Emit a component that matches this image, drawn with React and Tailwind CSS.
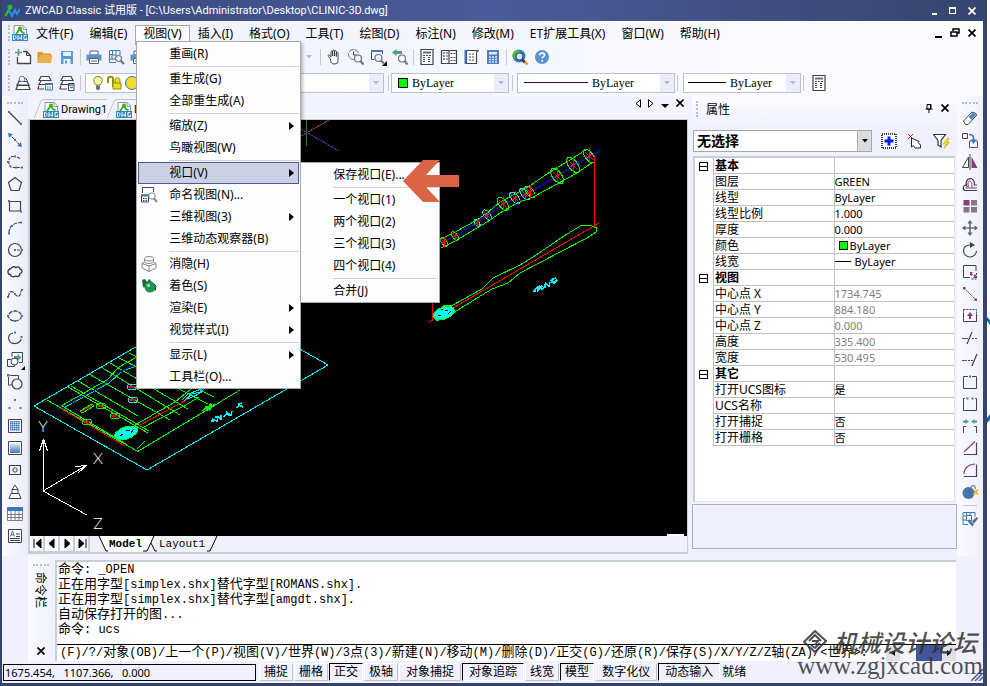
import { useState } from 'react'

const D = '#404448'
const B = '#3f78b4'
const P = '#8a3a80'
const G = '#4f9f86'

const icons = {
  dwg: (
    <>
      <path d="M2 .5h9l3.500 3.500v11.500h-12.500z" fill="#fff" stroke="#909498" />
      <path d="M11 .5v4h4" fill="none" stroke="#909498" />
      <path d="M4 9L8 3.500l1.500 3 3 2" fill="none" stroke="#3fae2a" strokeWidth="2" />
      <circle cx="8" cy="3.500" r="2" fill="#3fae2a" />
      <path d="M0 9h16v7H0z" fill="#2f86c8" />
      <path d="M1.500 14.500v-4c3.500 0 3.500 4 0 4M6 10v4.500l1.700-2 1.700 2V10M14.500 10.500H12v4h2.500v-2" fill="none" stroke="#fff" />
    </>
  ),
  newFile: (
    <>
      <path d="M8 2.500h3.500l4 4v8H2.500V8" fill="#fff" stroke={D} strokeWidth="1.300" />
      <path d="M11.500 2.500v4h4" fill="none" stroke={D} />
      <path d="M0 3.500h7M3.500 0v7" stroke={G} strokeWidth="1.600" />
    </>
  ),
  open: (
    <>
      <path d="M.5 14V3h5l1 1.500H14V14z" fill="#d9982a" />
      <path d="M.5 14L3 6h12.500L14 14z" fill="#eab04c" />
    </>
  ),
  save: (
    <>
      <path d="M2 2h12v13H2z" fill="#5b9bd5" />
      <path d="M4 3h8v4H4zM4.500 10h7v5h-7z" fill="#e8f1fa" />
      <path d="M6 11.500h2v3H6z" fill="#5b9bd5" />
    </>
  ),
  print: (
    <>
      <path d="M4 2h8v4H4z" fill="#fff" stroke="#5a6068" />
      <path d="M.5 5.500h15v6H.5z" fill="#5b95cf" />
      <path d="M3.500 9.500h9v5h-9z" fill="#fff" stroke="#5a6068" />
      <path d="M5 12h6" stroke="#5a6068" />
    </>
  ),
  preview: (
    <>
      <path d="M12 6V1.500H1.500v12H8M1.500 5.500h3v-4M8 1.500V6M4 6h4v4H4zM1.500 10h3" fill="none" stroke={B} />
      <circle cx="10.500" cy="9.500" r="3" fill="#f4f4fc" stroke="#707478" strokeWidth="1.200" />
      <path d="M12.700 11.700L16 15" stroke="#707478" strokeWidth="2" />
    </>
  ),
  hand: (
    <path d="M4.500 10L2.500 7.500C1.500 6 3 5.500 4 6.500l1 1.500V3c0-1.300 1.700-1.300 1.700 0v4-5c0-1.400 1.800-1.400 1.800 0v5-4.500c0-1.300 1.800-1.300 1.800 0V7.500 4c0-1.200 1.700-1.200 1.700 0v6.500c0 3-1 4.500-4 4.500s-3-2-3.500-5z" fill="#fff" stroke={D} />
  ),
  zoomTime: (
    <>
      <circle cx="5.500" cy="5.500" r="5" fill="none" stroke={B} strokeDasharray="5 1" />
      <path d="M5.500 2.500v3.500h3" fill="none" stroke={D} />
      <circle cx="10" cy="9.500" r="3.500" fill="#f4f4fc" stroke="#707478" strokeWidth="1.200" />
      <path d="M12.500 12l3 3.500" stroke="#707478" strokeWidth="2" />
    </>
  ),
  zoomWin: (
    <>
      <path d="M4 10.500H1.500V1.500h11V5" fill="none" stroke={D} />
      <path d="M1 2h12" stroke={B} strokeWidth="2" />
      <circle cx="8.500" cy="9" r="3.500" fill="#f4f4fc" stroke="#707478" strokeWidth="1.200" />
      <path d="M11 11.500l3 3" stroke="#707478" strokeWidth="2" />
      <path d="M17 12v5h-5z" fill="#000" />
    </>
  ),
  zoomPrev: (
    <>
      <path d="M0 3.500L4.500 0v2H10v3H4.500v2z" fill={G} />
      <circle cx="10" cy="9.500" r="3.500" fill="#f4f4fc" stroke="#707478" strokeWidth="1.200" />
      <path d="M12.500 12l3 3.500" stroke="#707478" strokeWidth="2" />
    </>
  ),
  propsTable: (
    <>
      <path d="M2 .5h12v15H2z" fill="#fff" stroke={D} strokeWidth="1.200" />
      <path d="M4 3.500h8" stroke="#686c70" strokeWidth="2" />
      <path d="M4 6.500h8M4 8.500h3M4 10.500h3M4 12.500h3M9 8.500h3M9 10.500h3M9 12.500h3" stroke={D} strokeDasharray="2 1" />
    </>
  ),
  panels: (
    <>
      <path d="M.5 1.500h15v13H.5zM8 1.500v13" fill="#fff" stroke={D} strokeWidth="1.200" />
      <path d="M2 4h2M2 7h2M2 10h2" stroke={B} strokeWidth="1.500" />
      <path d="M5 4h2M5 7h2M5 10h2M9.500 4.500h2M12.500 4.500h2M9.500 8.500h2M12.500 8.500h2M9.500 11.500h5" stroke={D} strokeDasharray="2 1" />
    </>
  ),
  palette: (
    <>
      <path d="M3.500 1.500H15l-1.500 2v11h-10z" fill="#fff" stroke={D} strokeWidth="1.200" />
      <path d="M2.500 1v14" stroke={B} strokeWidth="2" />
      <path d="M6 5h6M6 8h6M6 11h5" stroke={D} strokeDasharray="2 1" />
    </>
  ),
  calc: (
    <>
      <path d="M2 1h12v14H2z" fill="#5180c0" />
      <path d="M4 3h8v2.500H4z" fill="#dce8f6" />
      <path d="M4 8h8M4 10.500h8M4 13h8" stroke="#dce8f6" strokeWidth="1.500" strokeDasharray="2 1" />
    </>
  ),
  globe: (
    <>
      <circle cx="7" cy="7" r="6.500" fill="#2f7fd0" />
      <path d="M3 2c3-2 6 0 5 2S4 5 4 8s-3 1-3.500-1S1.500 3 3 2z" fill="#46b848" />
      <circle cx="7.500" cy="7.500" r="3.500" fill="#c6ecff" stroke="#444" strokeWidth="1.200" />
      <path d="M10 10.500l3 3" stroke="#4a2470" strokeWidth="2.500" />
      <path d="M13 13l2.500 2.500" stroke="#f0a020" strokeWidth="2.500" />
    </>
  ),
  help: (
    <>
      <circle cx="8" cy="8" r="7" fill="#5a92d0" />
      <path d="M5.700 6.300c0-3 4.800-3 4.800-.3 0 1.700-2.300 1.600-2.300 3.600M8.200 11v1.700" fill="none" stroke="#fff" strokeWidth="1.700" />
    </>
  ),
  layerPrev: (
    <>
      <path d="M4 6.500L2 10h12l-2-3.500zM2.500 10.500L1 14.500h14l-1.500-4z" fill="#fff" stroke={D} strokeWidth="1.200" />
      <path d="M3.500 6.500L5 3.500h6l1.500 3z" fill="#fff" stroke={D} />
      <circle cx="7" cy="4" r="2.800" fill="#eef4fb" stroke="#5a7c9c" />
    </>
  ),
  layerState: (
    <>
      <path d="M4 1.500h8l2 4H2zM4 6l-2 3.500h6M2 10.500L1 14h6" fill="#fff" stroke={D} strokeWidth="1.200" />
      <path d="M8.500 8.500h7v6.500h-7z" fill="#fff" stroke={B} />
      <path d="M8 9h8" stroke={B} strokeWidth="2" />
      <path d="M10 12h1.500M12.500 12H14M10 14h1.500M12.500 14H14" stroke={B} />
    </>
  ),
  layerMgr: (
    <>
      <path d="M4 1.500h8l2 4H2zM4 6l-2 3.500h7M2 10.500L1 14h7" fill="#fff" stroke={D} strokeWidth="1.200" />
      <path d="M9.500 8.500h5.500v7H9.500z" fill="#fff" stroke={D} />
      <path d="M10 10h5M11 12.500h3" stroke={B} strokeWidth="1.500" />
    </>
  ),
  line: (
    <>
      <path d="M2 2l12 12" stroke={D} strokeWidth="1.200" />
      <path d="M1 1h2v2H1zM13 13h2v2h-2z" fill={B} />
    </>
  ),
  xline: (
    <>
      <path d="M2 2l12 12" stroke={D} strokeDasharray="3 1" />
      <path d="M1 1l5 1-4 4zM15 15l-5-1 4-4z" fill={B} />
      <path d="M7 7h2v2H7z" fill={B} />
    </>
  ),
  pline: (
    <>
      <path d="M7 2.500H5.500c-5 0-5 10 0 11H14" fill="none" stroke={D} strokeWidth="1.200" strokeDasharray="3 1" />
      <path d="M10 3l3 1.500" stroke={D} strokeWidth="1.200" />
      <path d="M7 1.500h2v2H7zM0 7h2v2H0zM8 12.500h2v2H8zM14 12.500h2v2h-2z" fill={B} />
    </>
  ),
  polygon: <path d="M8 1.500l6.500 5-2.500 8H4l-2.500-8z" fill="none" stroke={D} strokeWidth="1.200" />,
  rect: (
    <>
      <path d="M3 3.500h10.500v9.500H2.500V4" fill="none" stroke={D} strokeWidth="1.200" />
      <path d="M1 2h2v2H1zM13 12.500h2v2h-2z" fill={B} />
    </>
  ),
  arc: (
    <>
      <path d="M2 13C2 7 6 3 13 2.500" fill="none" stroke={D} strokeWidth="1.200" strokeDasharray="4 1" />
      <path d="M1 12.500h2v2H1zM4 5h2v2H4zM13 1.500h2v2h-2z" fill={B} />
    </>
  ),
  circle: (
    <>
      <circle cx="8" cy="8" r="6.500" fill="none" stroke={D} strokeWidth="1.200" />
      <path d="M10 8h3" stroke={D} />
      <path d="M7 7h2v2H7zM14 7h2v2h-2z" fill={B} />
    </>
  ),
  cloud: (
    <path d="M4 4.500c1-2.500 4-2 5-1 2-1.500 4 0 4 1.500 3 1 2.500 4 0 4.500 0 3-3 3.500-4.500 2.500-2 1.500-5 .5-5-1.500C0 10 0 5.500 4 4.500z" fill="none" stroke={D} strokeWidth="1.400" />
  ),
  spline: (
    <>
      <path d="M1.500 11C2 4 6 5 8 8s5.500 4 6-3" fill="none" stroke={D} strokeWidth="1.200" strokeDasharray="4 1" />
      <path d="M0 10h2v2H0zM7 7h2v2H7zM14 3h2v2h-2z" fill={B} />
    </>
  ),
  ellipse: (
    <>
      <ellipse cx="8" cy="8" rx="6.500" ry="5" fill="none" stroke={D} strokeWidth="1.200" strokeDasharray="4 1" />
      <path d="M7 2h2v2H7zM0 7h2v2H0zM14 7h2v2h-2zM7 12h2v2H7z" fill={B} />
    </>
  ),
  ellipseArc: (
    <>
      <path d="M6 3C-1 5 1 14 8 13.500c4 0 6-3 6-4.500" fill="none" stroke={D} strokeWidth="1.200" />
      <path d="M7 1.500h2v2H7zM13.500 6h2v2h-2z" fill={B} />
    </>
  ),
  insert: (
    <>
      <path d="M5 4.500V.5h10.500v10H12" fill="none" stroke={D} />
      <path d="M7 4h3.500V2l4 3.500-4 3.500V7H7z" fill={G} />
      <circle cx="7.500" cy="9.500" r="3.500" fill="none" stroke={D} />
      <path d="M4 7.500H.5v7h7v-2" fill="none" stroke={D} />
      <path d="M18 14v4h-4z" fill="#000" />
    </>
  ),
  block: (
    <>
      <path d="M3 1.500h8.500V5M1.500 3v8H5" fill="none" stroke={D} />
      <path d="M0 0h2.500v2.500H0z" fill={B} />
      <circle cx="10" cy="10" r="5" fill="none" stroke={D} strokeWidth="1.200" />
    </>
  ),
  point: <path d="M7 3h2v2H7zM1.500 11h2v2h-2zM12.500 11h2v2h-2z" fill={B} />,
  hatch: (
    <>
      <path d="M1.500 1.500h13v13h-13z" fill="#fff" stroke={D} />
      <path d="M3 3h10v10H3z" fill="#7aa6d4" />
      <path d="M3 3.500h10M3 5.500h10M3 7.500h10M3 9.500h10M3 11.500h10" stroke={B} strokeDasharray="1 1" />
      <path d="M4 4.500h9M4 6.500h9M4 8.500h9M4 10.500h9M4 12.500h9" stroke="#cfe2f5" strokeDasharray="1 1" />
    </>
  ),
  gradient: (
    <>
      <defs>
        <linearGradient id="grad" x1="0" y1="0" x2="0" y2="1">
          <stop offset="0" stopColor="#e6f0fa" />
          <stop offset="1" stopColor="#3f78b4" />
        </linearGradient>
      </defs>
      <path d="M1.500 1.500h13v13h-13z" fill="#fff" stroke={D} />
      <path d="M3 3h10v10H3z" fill="url(#grad)" />
    </>
  ),
  region: (
    <>
      <path d="M2.500 3.500h11v9h-11z" fill="none" stroke={D} strokeWidth="1.200" />
      <circle cx="8" cy="8" r="2.200" fill="none" stroke={D} />
    </>
  ),
  solid: <path d="M8 1l3 4.500H5zM5 5.500h6V9.500H5zM4 9.500h8l2 5H2z" fill="#fff" stroke={D} />,
  grid: (
    <>
      <path d="M.5 1.500h15v13H.5z" fill="#fff" stroke="#777c82" />
      <path d="M.5 8.500h15M.5 11.500h15M4 5v9.500M8 5v9.500M12 5v9.500" stroke="#8a7484" />
      <path d="M0 1h16v4H0z" fill={B} />
    </>
  ),
  mtext: (
    <>
      <path d="M1.500 1.500h13v13h-13z" fill="#fff" stroke={D} />
      <path d="M3.500 8.500L5.500 3l2 5.500M4 7h3" fill="none" stroke={B} />
      <path d="M9 6h4M9 8.500h4M3 10.500h10M3 12.500h10" stroke={D} />
    </>
  ),
  erase: (
    <>
      <path d="M1.500 11L10 2l4 1.500.5 2L6 14.500H3.500z" fill="#fff" stroke={D} />
      <path d="M6.500 7L11 2.500 14 5l-4.500 5z" fill="#4a88c4" />
    </>
  ),
  copy: (
    <>
      <path d="M.5 1.500h5v5h-5z" fill="#fff" stroke={D} />
      <path d="M9 9H7.500v6.500h8V9H14" fill="none" stroke={P} />
      <path d="M7 2.500c4 0 5 2 4.500 6" fill="none" stroke={B} strokeWidth="1.700" />
      <path d="M8 7.500h7L11.500 12z" fill={B} />
    </>
  ),
  mirror: (
    <>
      <path d="M6.500 3v10.500H.5z" fill="#fff" stroke={D} />
      <path d="M8 0v16" stroke={D} />
      <path d="M9.500 2.500l6 11.500h-6z" fill={P} />
    </>
  ),
  offset: (
    <>
      <path d="M15 14.500H2.500c-3-3 0-6 2-5C2 2 13-1 12.500 9H15" fill="none" stroke={D} strokeWidth="1.200" />
      <path d="M15 12H4.500c-1 0-1-1.500 2-1.500C4 4 10.500 2 10 11.500" fill="none" stroke={P} />
    </>
  ),
  array: (
    <>
      <path d="M1.500 2h6v5.500h-6z" fill={P} />
      <path d="M9 2h6v5.500H9zM1.500 9h6v5.500h-6zM9 9h6v5.500H9z" fill="#847684" />
    </>
  ),
  move: (
    <>
      <path d="M8 1v14M1 8h14" stroke={D} strokeWidth="1.200" />
      <path d="M8 0l2.500 3.500h-5zM8 16l2.500-3.500h-5zM0 8l3.500-2.500v5zM16 8l-3.500-2.500v5z" fill="#5a6066" />
    </>
  ),
  rotate: (
    <>
      <path d="M8 3C3 3 1.500 6 1.500 9s3 6 6.500 6 6.500-3 6.500-6" fill="none" stroke={D} strokeWidth="1.200" />
      <path d="M8 0l5 3-5 3z" fill={D} />
    </>
  ),
  scale: (
    <>
      <path d="M14 7V1.500H1.500v12H8" fill="none" stroke={D} />
      <path d="M14.500 9v6h-6" fill="none" stroke={D} strokeDasharray="2 1" />
      <path d="M8 8h3L9.500 9.500l1.500 1L9.500 12 8 11zM14 14h-3l1.500-1.500-1-1L13 10l1 1.500z" fill={P} />
    </>
  ),
  stretch: (
    <>
      <path d="M2 2l12 12" stroke={D} strokeDasharray="2 1" />
      <path d="M1 1h2.500v2.500H1zM12.500 12.500H15V15h-2.500z" fill={P} />
    </>
  ),
  lengthen: (
    <>
      <path d="M1.500 1.500h13v12h-13z" fill="none" stroke={D} strokeDasharray="2 1" />
      <path d="M1.500 6v7.500h13V6" fill="none" stroke={D} />
      <path d="M8 4l3 4H9v3H7V8H5z" fill={P} />
    </>
  ),
  trim: (
    <>
      <path d="M10 2L5 14" stroke={D} strokeWidth="1.200" />
      <path d="M0 8.500h6" stroke={P} />
      <path d="M10 8.500h6" stroke={D} strokeDasharray="2 1" />
    </>
  ),
  extend: (
    <>
      <path d="M15 2l-5 12" stroke={D} strokeWidth="1.200" />
      <path d="M0 8.500h5" stroke={P} />
      <path d="M6 8.500h5" stroke={D} strokeDasharray="2 1" />
    </>
  ),
  breakAt: (
    <>
      <path d="M6 2.500H1.500v12h13v-12H10" fill="none" stroke={D} />
      <path d="M7 1.500h2v2H7z" fill={B} />
    </>
  ),
  breakTwo: (
    <>
      <path d="M3 2.500H1.500v12h13v-12H13" fill="none" stroke={D} />
      <path d="M4.500 1.500h2v2h-2zM9.500 1.500h2v2h-2z" fill={B} />
    </>
  ),
  join: (
    <>
      <path d="M1.500 15V8.500H4M14.500 15V8.500H12" fill="none" stroke={D} />
      <path d="M7 3.500L3.500 1v1.500H1v2h2.500V6zM9 3.500L12.500 1v1.500H15v2h-2.500V6z" fill={G} />
    </>
  ),
  chamfer: (
    <>
      <path d="M2 14.500h12.500v-12" fill="none" stroke={D} strokeWidth="1.200" />
      <path d="M2 12L13 1.500" stroke={P} strokeWidth="1.200" />
    </>
  ),
  fillet: (
    <>
      <path d="M2 14.500h12.500v-12" fill="none" stroke={D} strokeWidth="1.200" />
      <path d="M2 12C2 6 7 2 13 2" fill="none" stroke={P} strokeWidth="1.200" />
    </>
  ),
  explode: (
    <>
      <circle cx="6.500" cy="9" r="6" fill="#4674a8" />
      <path d="M9 4c1-4 4-3 4.500 1" fill="none" stroke="#7a9cc4" strokeWidth="1.500" />
      <path d="M11.500 5.500l4.500 5M16 5.500l-4.500 5" stroke="#f0b020" strokeWidth="1.500" />
    </>
  ),
  match: (
    <>
      <path d="M13 6V1.500H1v12h5M1 5h3.500V1.500M8 1.500V4M4.500 4.500h5v5h-5zM1 9h3.500" fill="none" stroke={B} />
      <path d="M7 8l5 5-1.500 2.500L6 11z" fill={B} />
      <path d="M10 10l5-4 1 1.500-4 5z" fill="#606468" />
    </>
  ),
  namedView: (
    <>
      <path d="M1.500 6V.5h11V5" fill="none" stroke={D} />
      <path d="M.5 8h7v7h-7z" fill="#fff" stroke={D} />
      <path d="M0 8.500h8" stroke={B} strokeWidth="2" />
      <path d="M2 11.500h1.500M4.500 11.500H6M2 13.500h1.500M4.500 13.500H6" stroke={D} />
      <circle cx="11" cy="9" r="3.200" fill="#fff" stroke="#888" />
      <path d="M13 11.500l3 3.500" stroke="#888" strokeWidth="2" />
    </>
  ),
  hide: (
    <>
      <path d="M3.500 3v3L1 7.500V12l7 3.500 7-3.500V7.500L12.500 6V3" fill="#fff" stroke="#8a8488" />
      <ellipse cx="8" cy="2.800" rx="4.500" ry="2.200" fill="#fff" stroke="#8a8488" />
      <path d="M3.500 6c2 2 7 2 9 0M1 7.500l7 2.500 7-2.500M8 10v5.500" fill="none" stroke="#8a8488" />
    </>
  ),
  shade: (
    <>
      <path d="M1 2l3-1 2 3 2-3 3 3-5 6-4-1z" fill="#156b3c" />
      <circle cx="9" cy="9" r="5.500" fill="#1f9150" />
      <circle cx="7.500" cy="7.500" r="1.700" fill="#8fe0a8" />
      <path d="M13 6l2 2-1 5" fill="none" stroke="#0c4424" />
    </>
  ),
}

function Icon({ name, className = '' }) {
  return (
    <svg width="16" height="16" viewBox="0 0 16 16" className={`shrink-0 overflow-visible ${className}`} aria-hidden="true">
      {icons[name]}
    </svg>
  )
}

function ToolButton({ name }) {
  return (
    <button type="button" aria-label={name} className="flex size-[22px] shrink-0 items-center justify-center">
      <Icon name={name} />
    </button>
  )
}

function Sep() {
  return <span className="mx-0.5 h-4 w-px shrink-0 bg-[#c2cccc]" />
}

function GripV() {
  return <span className="h-4 w-0 shrink-0 border-l-2 border-dotted border-[#b8bcc4]" />
}

function GripH() {
  return <span className="h-0 w-4 shrink-0 border-t-2 border-dotted border-[#b8bcc4]" />
}

function Cross({ className = '' }) {
  return (
    <svg width="8" height="8" viewBox="0 0 8 8" className={className} aria-hidden="true">
      <path d="M.5.5l7 7M7.500.5l-7 7" stroke="currentColor" strokeWidth="1.700" />
    </svg>
  )
}

function ComboArrow() {
  return (
    <span className="pointer-events-none flex w-3.5 shrink-0 items-center justify-center self-stretch bg-[#ecedfc]">
      <svg width="6" height="4" viewBox="0 0 6 4" aria-hidden="true"><path d="M0 0h6L3 3.500z" fill="#b4bcc0" /></svg>
    </span>
  )
}

function Combo({ label, className, children }) {
  return (
    <div className={`flex h-5 shrink-0 items-center border border-[#b8c4c8] bg-white ${className}`}>
      {children}
      <select aria-label={label} className="min-w-0 flex-1 appearance-none bg-transparent font-['Liberation_Serif',serif] text-[12px] leading-4">
        <option>{label === '图层' ? '' : 'ByLayer'}</option>
      </select>
      <ComboArrow />
    </div>
  )
}

const viewMenu = [
  { label: '重画(R)' },
  null,
  { label: '重生成(G)' },
  { label: '全部重生成(A)' },
  null,
  { label: '缩放(Z)', sub: true },
  { label: '鸟瞰视图(W)' },
  null,
  { label: '视口(V)', sub: true, open: true },
  { label: '命名视图(N)...', icon: 'namedView' },
  { label: '三维视图(3)', sub: true },
  { label: '三维动态观察器(B)' },
  null,
  { label: '消隐(H)', icon: 'hide' },
  { label: '着色(S)', icon: 'shade' },
  { label: '渲染(E)', sub: true },
  { label: '视觉样式(I)', sub: true },
  null,
  { label: '显示(L)', sub: true },
  { label: '工具栏(O)...' },
]

const viewportMenu = [
  { label: '保存视口(E)...' },
  null,
  { label: '一个视口(1)' },
  { label: '两个视口(2)' },
  { label: '三个视口(3)' },
  { label: '四个视口(4)' },
  null,
  { label: '合并(J)' },
]

function Menu({ items, className }) {
  return (
    <div role="menu" className={`absolute border border-[#a4aaac] bg-[#fdfdff] px-px pt-px shadow-[2px_2px_3px_rgba(0,0,0,0.25)] ${className}`}>
      {items.map((item, i) =>
        item === null ? (
          <div key={i} className="flex h-[3px] items-center pl-[31px]">
            <span className="h-px flex-1 bg-[#ccd4d6]" />
          </div>
        ) : (
          <div key={item.label} className="relative">
            <button
              type="button"
              role="menuitem"
              className={`flex h-[22px] w-full items-center whitespace-nowrap border pr-1 ${
                item.open ? 'border-[#4a5a9c] bg-[#cbd0e4]' : 'border-transparent'
              }`}
            >
              <span className="flex w-[30px] shrink-0 pl-0.5">{item.icon && <Icon name={item.icon} />}</span>
              <span className="flex-1 text-left">{item.label}</span>
              {item.sub && (
                <svg width="5" height="8" viewBox="0 0 5 8" aria-hidden="true"><path d="M0 0l5 4-5 4z" /></svg>
              )}
            </button>
            {item.open && <Menu items={viewportMenu} className="top-0 left-full ml-px w-[140px]" />}
          </div>
        )
      )}
    </div>
  )
}

const menuTitles = ['文件(F)', '编辑(E)', '视图(V)', '插入(I)', '格式(O)', '工具(T)', '绘图(D)', '标注(N)', '修改(M)', 'ET扩展工具(X)', '窗口(W)', '帮助(H)']

function TitleBar() {
  return (
    <header className="flex h-[21px] items-center bg-linear-to-r from-[#36477a] via-[#4b5b9b] to-[#35456f] pr-[7px] pl-0.5 text-white">
      <svg width="16" height="14" viewBox="0 0 16 14" aria-hidden="true">
        <path d="M1.500 12L6 3.500" stroke="#35b52c" strokeWidth="2.500" />
        <circle cx="6" cy="3" r="2.500" fill="#35b52c" />
        <path d="M5 6l3 6 3-6 2 4 3-5" fill="none" stroke="#2f8ee0" strokeWidth="2" />
      </svg>
      <h1 className="ml-[5px] flex-1 truncate font-['Roboto','Noto_Sans_CJK_SC',sans-serif] text-[11px]">ZWCAD Classic 试用版 - [C:\Users\Administrator\Desktop\CLINIC-3D.dwg]</h1>
      <div className="flex items-center gap-3">
        <button type="button" aria-label="最小化" className="mt-1.5 h-0.5 w-[5px] bg-white" />
        <button type="button" aria-label="最大化" className="h-[7px] w-[7px] border border-t-2 border-white" />
        <button type="button" aria-label="关闭"><Cross /></button>
      </div>
    </header>
  )
}

function MenuBar() {
  const [open, setOpen] = useState('视图(V)')
  return (
    <nav className="relative z-20 flex h-[23px] items-center bg-linear-to-r from-[#eff0fc] to-[#fcfcff] pr-[7px] pl-1.5">
      <GripV />
      <Icon name="dwg" className="ml-0.5" />
      {menuTitles.map(title => (
        <div key={title} className="relative -mb-1 h-5">
          <button
            type="button"
            onClick={() => setOpen(open === title ? null : title)}
            className={`h-full whitespace-nowrap border border-b-0 px-[7px] pb-0.5 ${
              open === title ? 'border-[#a4aaac] bg-[#fcfcff]' : 'border-transparent'
            }`}
          >
            {title}
          </button>
          {open === title && title === '视图(V)' && <Menu items={viewMenu} className="top-4 left-px w-[165px]" />}
        </div>
      ))}
      <div className="ml-auto flex items-center gap-2">
        <button type="button" aria-label="最小化文档" className="mt-2 h-0.5 w-[7px] bg-black" />
        <button type="button" aria-label="还原文档">
          <svg width="10" height="9" viewBox="0 0 10 9" aria-hidden="true"><path d="M3 3V1h6v4H7M1 4h6v4H1z" fill="none" stroke="#000" strokeWidth="1.500" /></svg>
        </button>
        <button type="button" aria-label="关闭文档"><Cross /></button>
      </div>
    </nav>
  )
}

function Toolbars() {
  return (
    <div className="bg-linear-to-r from-[#eff0fc] to-[#fcfcff]">
      <div className="flex h-[26px] items-center pl-1.5">
        <GripV />
        <span className="w-0.5" />
        {['newFile', 'open', 'save'].map(n => <ToolButton key={n} name={n} />)}
        <Sep />
        {['print', 'preview', 'print'].map((n, i) => <ToolButton key={i} name={n} />)}
        <span className="flex w-[163px] justify-end">
          <svg width="6" height="4" viewBox="0 0 6 4" aria-hidden="true"><path d="M0 0h6L3 3.500z" fill="#b4bcc0" /></svg>
        </span>
        <span className="w-1.5" />
        <Sep />
        {['hand', 'zoomTime', 'zoomWin', 'zoomPrev'].map(n => <ToolButton key={n} name={n} />)}
        <Sep />
        {['propsTable', 'panels', 'palette', 'calc'].map(n => <ToolButton key={n} name={n} />)}
        <Sep />
        {['globe', 'help'].map(n => <ToolButton key={n} name={n} />)}
      </div>
      <div className="flex h-[26px] items-center pb-px pl-1.5">
        <GripV />
        <span className="w-0.5" />
        {['layerPrev', 'layerState', 'layerMgr'].map(n => <ToolButton key={n} name={n} />)}
        <Sep />
        <Combo label="图层" className="ml-0.5 w-[299px]">
          <svg width="56" height="16" viewBox="0 0 56 16" className="ml-1" aria-hidden="true">
            <path d="M8 1.500c-5 0-5.500 5-2 8.500h4c3.500-3.500 3-8.500-2-8.500z" fill="#fff3a0" stroke="#8a7a30" />
            <path d="M6 10.500h4V14l-2 1.500L6 14z" fill="#707070" />
            <path d="M18 8V4c0-3 5-3 5 0v8" fill="none" stroke="#8f8f10" strokeWidth="2" />
            <path d="M23 8h8v6h-8zM25 8V5c0-3 5-3 5 0v3" fill="#e8e020" stroke="#8f8f10" />
            <circle cx="42" cy="8" r="6.500" fill="#f4dc30" stroke="#2f6fb0" />
          </svg>
        </Combo>
        <span className="w-0.5" />
        <Sep />
        <Combo label="颜色" className="w-[118px]">
          <span className="mr-1 ml-1.5 size-2.5 border border-black bg-[#00ff00]" />
        </Combo>
        <span className="w-px" />
        <Sep />
        <Combo label="线型" className="ml-0.5 w-[158px]">
          <span className="mr-1 ml-1.5 h-px w-16 bg-[#400818]" />
        </Combo>
        <Sep />
        <Combo label="线宽" className="ml-[3px] w-[118px]">
          <span className="mr-1 ml-1 h-px w-[38px] bg-black" />
        </Combo>
        <Sep />
        <span className="w-0.5" />
        <ToolButton name="propsTable" />
      </div>
    </div>
  )
}

const drawTools = ['line', 'xline', 'pline', 'polygon', 'rect', 'arc', 'circle', 'cloud', 'spline', 'ellipse', 'ellipseArc', 'insert', 'block', 'point', 'hatch', 'gradient', 'region', 'solid', 'grid', 'mtext']
const editTools = ['erase', 'copy', 'mirror', 'offset', 'array', 'move', 'rotate', 'scale', 'stretch', 'lengthen', 'trim', 'extend', 'breakAt', 'breakTwo', 'join', 'chamfer', 'fillet', 'explode']

const docs = ['Drawing1', 'Drawing2', 'CLINIC-3D.dwg']

function DocTabs() {
  return (
    <div className="flex h-6 items-end border-b border-[#c4d0d0] bg-[#f3f3fe] pl-1.5 font-['Roboto','Noto_Sans_CJK_SC',sans-serif] text-[11px]">
      {docs.map((doc, i) => (
        <div key={doc} className="flex h-5">
          <svg width="9" height="20" viewBox="0 0 9 20" className="shrink-0" aria-hidden="true"><path d="M0 19.500L7 2l2-1.500" fill="none" stroke="#b8c8c4" /></svg>
          <button
            type="button"
            className={`flex items-center gap-0.5 border-t border-[#b8c8c4] whitespace-nowrap ${i === 2 ? 'font-bold text-[#003c8c]' : ''}`}
          >
            <Icon name="dwg" />
            <span>{doc}</span>
          </button>
        </div>
      ))}
      <svg width="10" height="20" viewBox="0 0 10 20" className="shrink-0" aria-hidden="true"><path d="M0 .5l2 1.500 7 17.500" fill="none" stroke="#b8c8c4" /></svg>
      <div className="ml-auto flex h-6 items-center gap-[7px] pr-1 pb-2">
        <button type="button" aria-label="上一个"><svg width="6" height="9" viewBox="0 0 6 9" aria-hidden="true"><path d="M5.500.8v7.400L1 4.500z" fill="none" stroke="#000" /></svg></button>
        <button type="button" aria-label="下一个"><svg width="6" height="9" viewBox="0 0 6 9" aria-hidden="true"><path d="M.5.8v7.400L5 4.500z" fill="none" stroke="#000" /></svg></button>
        <button type="button" aria-label="文档列表" className="mt-1"><svg width="8" height="5" viewBox="0 0 8 5" aria-hidden="true"><path d="M0 1h8L4 5z" /></svg></button>
        <button type="button" aria-label="关闭图纸"><Cross /></button>
      </div>
    </div>
  )
}

// cross sections along the spine: x, y, half length, stroke
const sections = [
  [444, 242, 5, '#0f0'],
  [455, 236, 5, '#0f0'],
  [477, 223, 4, '#0ff'],
  [487, 215, 6, '#0ff'],
  [503, 204, 8, '#0f0'],
  [515, 198, 7, '#0ff'],
  [525, 194, 7, '#0ff'],
  [530, 192, 7, '#0f0'],
  [557, 176, 9, '#0f0'],
  [573, 165, 9, '#0f0'],
  [589, 156, 8, '#0f0'],
]

const smallParts = [
  [132, 387, '#0ff'],
  [133, 400, '#0ff'],
  [101, 406, '#0f0'],
  [115, 416, '#0f0'],
  [87, 422, '#0f0'],
]

function Drawing() {
  return (
    <svg className="absolute inset-0 h-full w-full" shapeRendering="crispEdges" role="img" aria-label="CLINIC-3D">
      <g transform="translate(-30 -120)" fill="none" stroke="#0f0">
        <path d="M306.500 120v26" stroke="#2d7a2d" />
        <path d="M301 136l28-16" stroke="#8c3c3c" />
        <path d="M301 129l38 22" stroke="#34348c" />

        <path d="M441 239l14-7 22-12 10-7 13-11 17-9 11-6 25-17 17-10 17-11" />
        <path d="M441 248l14-7 22-13 10-6 16-11 14-8 16-6 24-13 20-11 16-11" />
        <path d="M438 245l17-9 32-20 16-12 27-12 27-16 16-10 28-16" stroke="#00f" />
        {sections.map(([x, y, r, color]) => (
          <g key={x}>
            <ellipse cx={x} cy={y} rx={r} ry={r / 2} stroke={color} transform={`rotate(52 ${x} ${y})`} />
            <path d={`M${x} ${y - r}v${r * 2}M${x - r / 2} ${y - r / 2}l${r} ${r}M${x - 3} ${y + 2}l6 -4`} stroke="#f00" />
          </g>
        ))}
        <path d="M594.500 155v72M429 322l170-99M432.500 303v18" stroke="#f00" />
        <path d="M594 227l-4-2h-8l-15 9-34 23-13 8-27 13-11 11-29 16-10 1-10 11 4 4 16-8 29-18 10-6 16-6 12-10 40-21 27-14 9-6v-5z" />
        <ellipse cx="444" cy="313" rx="11" ry="6" fill="#0ff" stroke="#0f0" transform="rotate(-20 444 313)" />
        <path d="M438 316l3-1M445 310l3 1M448 314l3-3M441 309l2 0" stroke="#000" />
        <path d="M533 291h3M534 290l4-3v3l4-4M539 286l3 3 3-2v-3M545 283l4 3 1-4M551 280l3 3 3-3M551 283l2-4 3-1" stroke="#0ff" strokeWidth="1.600" />

        <path d="M34 406l181-105 113 64-181 105z" stroke="#0ff" />
        <path d="M47 400l90 51M137 452l103-62" />
        <path d="M68 387l80 46M71 386l78 45M78 381l60 35M89 374l81 46M101 367l79 48M110 363l78 46M119 358l89 46M129 353l85 44" />
        <path d="M61 406l46-26 12-13 18-10M65 407l44-24 13-12 15-5" />
        <path d="M58 410l44-24 18-14 17-9" stroke="#00f" />
        <path d="M60 408l65 38M138 426l52-28" stroke="#f00" />
        <path d="M62 406l64 38M135 425l40-23 16-13M142 428l42-22 15-9M137 449l8-8" />
        <path d="M80 411l12-7 2 2-12 7z" />
        <path d="M82 411l10-6M122 435l6-4" stroke="#f00" />
        {smallParts.map(([x, y, color]) => (
          <g key={y}>
            <ellipse cx={x} cy={y} rx="5" ry="3" stroke={color} />
            <path d={`M${x - 3} ${y + 1}l6 -2M${x - 2} ${y - 2}l4 4M${x - 4} ${y - 1}h6`} stroke="#f00" />
          </g>
        ))}
        <ellipse cx="126" cy="433" rx="12" ry="6" fill="#0ff" stroke="#0f0" transform="rotate(-20 126 433)" />
        <path d="M120 436l3-2M126 430l4 1M131 433l3-4" stroke="#000" />
        <path d="M182 400l6-6 14-5M184 401l8-7 8-2M188 399l14-7M194 397l10-8" stroke="#0ff" />
        <path d="M203 411l3-4 1 3 3-5 0 4 4-5M205 408l7-3" strokeWidth="1.600" />
        <path d="M211 421h3M212 419l5 2 1-4 3 2 0-4M215 417l7 1M224 417l3-4 2 3M226 412l5 3 1-4M237 408l2-3 4 2M238 404l4-1" stroke="#0ff" strokeWidth="1.600" />

        <path d="M43.500 491v-52l-4 12M43.500 439l4 12M43 491l44-26-12 2M87 465l-9 8M43 491l44 24" stroke="#fff" />
        <path d="M667 535h17" stroke="#fff" strokeWidth="2" />
        <g fill="#fff" stroke="none" className="font-['Lato',sans-serif] text-[16px] font-light">
          <text x="43" y="432" textAnchor="middle">Y</text>
          <text x="98" y="464" textAnchor="middle">X</text>
          <text x="98" y="529" textAnchor="middle">Z</text>
        </g>
      </g>
    </svg>
  )
}

function SheetTabs() {
  const nav = ['M3 1v9M10 1v9L5 5.500z', 'M8 1v9L3 5.500z', 'M4 1v9l5-4.500z', 'M10 1v9M3 1v9l5-4.500z']
  return (
    <div className="flex h-4 items-stretch bg-[#f0f0fe] font-['Liberation_Mono',monospace] text-[11px]">
      {nav.map(d => (
        <button key={d} type="button" aria-label="翻页" className="flex w-[15px] items-center justify-center border-r-2 border-b border-[#c8d0d4] bg-[#f8f8ff]">
          <svg width="12" height="11" viewBox="0 0 12 11" aria-hidden="true"><path d={d} stroke="#000" strokeWidth="1" /></svg>
        </button>
      ))}
      <svg width="10" height="16" viewBox="0 0 10 16" className="ml-2 shrink-0" aria-hidden="true">
        <path d="M1 0h9v16H8z" fill="#fff" />
        <path d="M1 0l7 15h2" fill="none" stroke="#000" />
      </svg>
      <button type="button" className="bg-white px-px leading-4 font-bold">Model</button>
      <svg width="14" height="16" viewBox="0 0 14 16" className="shrink-0" aria-hidden="true">
        <path d="M0 0h12L4 16H0z" fill="#fff" />
        <path d="M11 0L4 15H0M8 7l4 8h2" fill="none" stroke="#000" />
      </svg>
      <button type="button" className="px-0.5 leading-4">Layout1</button>
      <svg width="12" height="16" viewBox="0 0 12 16" aria-hidden="true"><path d="M10 0L3 15H0" fill="none" stroke="#000" /></svg>
    </div>
  )
}

const properties = [
  {
    group: '基本',
    rows: [
      ['图层', 'GREEN'],
      ['线型', 'ByLayer'],
      ['线型比例', '1.000'],
      ['厚度', '0.000'],
      ['颜色', 'ByLayer', 'color'],
      ['线宽', 'ByLayer', 'weight'],
    ],
  },
  {
    group: '视图',
    rows: [
      ['中心点 X', '1734.745', 'readonly'],
      ['中心点 Y', '884.180', 'readonly'],
      ['中心点 Z', '0.000', 'readonly'],
      ['高度', '335.400', 'readonly'],
      ['宽度', '530.495', 'readonly'],
    ],
  },
  {
    group: '其它',
    rows: [
      ['打开UCS图标', '是'],
      ['UCS名称', ''],
      ['打开捕捉', '否'],
      ['打开栅格', '否'],
    ],
  },
]

function PropertiesPanel() {
  return (
    <aside className="ml-1 flex w-[265px] shrink-0 flex-col bg-[#f0f0fe]">
      <div className="flex h-[34px] items-start bg-linear-to-b from-[#fbfbff] to-[#f0f0fe] pt-[5px] pr-2 pl-1">
        <GripV />
        <h2 className="ml-2 flex-1 leading-[18px]">属性</h2>
        <button type="button" aria-label="固定" className="mt-[3px]">
          <svg width="8" height="9" viewBox="0 0 8 9" aria-hidden="true"><path d="M2 .5h4v4.500H2zM.5 5h7M4 5v4M5.500 1v4" fill="none" stroke="#000" /></svg>
        </button>
        <button type="button" aria-label="关闭属性" className="mt-[3px] ml-2"><Cross /></button>
      </div>
      <div className="flex items-center pl-px">
        <div className="flex h-[22px] w-[179px] border border-[#a0a8b0] bg-white">
          <select aria-label="选择集" className="min-w-0 flex-1 appearance-none bg-transparent pl-[3px] text-[14px] leading-5 font-bold">
            <option>无选择</option>
          </select>
          <span className="pointer-events-none flex w-3.5 items-center justify-center border-l border-[#b0b0b0] bg-[#dcdcdc]">
            <svg width="6" height="4" viewBox="0 0 6 4" aria-hidden="true"><path d="M0 0h6L3 3.500z" /></svg>
          </span>
        </div>
        <div className="ml-[9px] flex gap-2.5">
          <button type="button" aria-label="快速选择">
            <svg width="16" height="16" viewBox="0 0 16 16" aria-hidden="true">
              <path d="M1 1h14v14H1z" fill="#fff" stroke="#000" strokeWidth="1.500" strokeDasharray="1 1" />
              <path d="M8 3.500v9M3.500 8h9" stroke="#0020f0" strokeWidth="3" />
            </svg>
          </button>
          <button type="button" aria-label="选择对象">
            <svg width="16" height="16" viewBox="0 0 16 16" aria-hidden="true">
              <path d="M1 1l5 5M6 1L1 6" stroke="#d02030" />
              <path d="M4.500 5v9l2-1.500L8 15h5.500v-3L11 9.500l1-1z" fill="#fff" stroke="#202428" />
            </svg>
          </button>
          <button type="button" aria-label="过滤">
            <svg width="17" height="16" viewBox="0 0 17 16" aria-hidden="true">
              <path d="M.5 1.500h12L8 7.500V14l-3-2V7.500z" fill="#fff" stroke="#303438" strokeWidth="1.200" />
              <path d="M15 5l-5 6h3l-2 4.500 5.500-6H14L16 5z" fill="#f8e000" stroke="#a09010" strokeWidth=".5" />
            </svg>
          </button>
        </div>
      </div>
      <div className="mt-1 mr-0.5 ml-px flex-1 border border-t-2 border-l-2 border-[#c6d0d4] border-r-[#e2e4e8] border-b-[#e2e4e8] bg-white">
        <table className="w-full table-fixed border-separate border-spacing-0">
          <colgroup>
            <col className="w-[18px]" />
            <col />
            <col />
          </colgroup>
          {properties.map(({ group, rows }) => (
            <tbody key={group}>
              <tr>
                <td className="h-4 p-0">
                  <button type="button" aria-label={`折叠${group}`} className="ml-1 flex size-[9px] items-center border border-black">
                    <span className="h-px flex-1 bg-black" />
                  </button>
                </td>
                <th className="h-4 border-b border-l border-[#c0c0c0] p-0 pl-px text-left text-[12px] leading-[15px] font-bold">{group}</th>
                <td className="h-4 border-b border-l border-[#c0c0c0] p-0" />
              </tr>
              {rows.map(([name, value, kind]) => (
                <tr key={name}>
                  <td className="h-4 p-0" />
                  <td className="h-4 border-b border-l border-[#c0c0c0] p-0 pl-px leading-[15px] whitespace-nowrap">{name}</td>
                  <td className={`h-4 border-b border-l border-[#c0c0c0] p-0 text-[11px] leading-[15px] ${kind === 'readonly' ? 'text-[#808080]' : ''}`}>
                    <span className="flex items-center">
                      {kind === 'color' && <span className="mr-0.5 ml-1 size-[9px] border border-black bg-[#00ff00]" />}
                      {kind === 'weight' && <span className="mr-1 h-px w-4 bg-black" />}
                      {value}
                    </span>
                  </td>
                </tr>
              ))}
            </tbody>
          ))}
        </table>
      </div>
      <div className="mt-0.5 mb-[7px] h-[45px] border border-[#a8b0bc]" />
    </aside>
  )
}

function Mono({ text }) {
  return text.split(/([\u4e00-\u9fff]+)/).map((part, i) =>
    i % 2 ? <span key={i} className="text-[13px]">{part}</span> : part
  )
}

const history = [
  '命令: _OPEN',
  '正在用字型[simplex.shx]替代字型[ROMANS.shx].',
  '正在用字型[simplex.shx]替代字型[amgdt.shx].',
  '自动保存打开的图...',
  '命令: ucs',
]

const prompt = '(F)/?/对象(OB)/上一个(P)/视图(V)/世界(W)/3点(3)/新建(N)/移动(M)/删除(D)/正交(G)/还原(R)/保存(S)/X/Y/Z/Z轴(ZA)/<世界>:'

function CommandPanel() {
  return (
    <section className="flex h-[105px] bg-[#f0f0fe] pr-[27px] pl-[26px]">
      <div className="flex w-[27px] flex-col items-center bg-linear-to-r from-[#fafaff] to-[#f0f0fe] pt-2 pr-0.5 pb-1.5">
        <GripH />
        <h2 className="mt-1.5 flex-1 font-['Noto_Sans_CJK_SC',sans-serif] text-[12px] leading-4 [text-orientation:sideways] [writing-mode:vertical-rl]">命令栏</h2>
        <button type="button" aria-label="关闭命令栏"><Cross /></button>
      </div>
      <div className="mt-1 flex min-w-0 flex-1 flex-col border-t-2 border-l-2 border-[#c6d0d4] bg-white font-['Liberation_Mono','Noto_Sans_CJK_SC',monospace] text-[12px] leading-[15px]">
        <div className="flex-1 pl-px">
          {history.map(line => (
            <p key={line} className="h-[15px] whitespace-pre"><Mono text={line} /></p>
          ))}
        </div>
        <div className="flex h-[17px] items-center border-t border-black pl-[3px]">
          <label htmlFor="command" className="shrink-0 whitespace-nowrap"><Mono text={prompt} /></label>
          <input id="command" className="w-0 min-w-0 flex-1 outline-none" />
          <div className="flex h-4 w-[70px] shrink-0 items-stretch bg-[#f4f4f4]">
            <button type="button" aria-label="向左" className="flex w-3.5 items-center justify-center bg-[#e0e0e4]">
              <svg width="4" height="6" viewBox="0 0 4 6" aria-hidden="true"><path d="M4 0v6L0 3z" /></svg>
            </button>
            <span className="flex-1" />
            <span className="w-[26px] bg-[#44549a]" />
            <button type="button" aria-label="向右" className="flex w-3.5 items-center justify-center bg-[#e0e0e4]">
              <svg width="4" height="6" viewBox="0 0 4 6" aria-hidden="true"><path d="M0 0v6l4-3z" /></svg>
            </button>
          </div>
        </div>
      </div>
    </section>
  )
}

const toggles = [
  ['捕捉', false],
  ['栅格', false],
  ['正交', true],
  ['极轴', false],
  ['对象捕捉', false],
  ['对象追踪', true],
  ['线宽', false],
  ['模型', true],
  ['数字化仪', false],
  ['动态输入', true],
]

function StatusBar() {
  const [states, setStates] = useState(() => Object.fromEntries(toggles))
  return (
    <footer className="flex h-[22px] items-center bg-[#f0f0fe] pl-px">
      <div className="mr-[3px] h-[17px] w-[253px] border border-black pl-px text-[11px] leading-[15px] whitespace-pre">1675.454,   1107.366,   0.000</div>
      <div className="flex gap-px">
        {toggles.map(([label]) => (
          <button
            key={label}
            type="button"
            aria-pressed={states[label]}
            onClick={() => setStates({ ...states, [label]: !states[label] })}
            className={`h-[18px] border leading-4 ${label.length > 2 ? 'px-1.5' : 'px-1'} ${
              states[label] ? 'border-t-black border-r-white border-b-white border-l-black' : 'border-t-white border-r-[#b8c4c8] border-b-[#b8c4c8] border-l-white'
            }`}
          >
            {label}
          </button>
        ))}
      </div>
      <span className="ml-0.5">就绪</span>
      <svg width="12" height="12" viewBox="0 0 12 12" className="mt-1.5 ml-auto" aria-hidden="true">
        <path d="M0 12L12 0M4 12l8-8M8 12l4-4" stroke="#4a5a9c" strokeWidth="1.500" />
      </svg>
    </footer>
  )
}

function Watermark() {
  return (
    <div className="pointer-events-none absolute right-0 bottom-[5px] z-10 text-right text-[#303030]/85">
      <div className="flex items-center justify-end gap-1.5 pr-1.5">
        <svg width="24" height="24" viewBox="0 0 24 24" aria-hidden="true">
          <path d="M12 1l11 10-11 11L1 12zM6 11l6-6 6 6M9 11h6l-3 4M8 15l4 3 5-5" fill="none" stroke="currentColor" strokeWidth="2" />
        </svg>
        <span className="font-['Noto_Sans_CJK_SC',sans-serif] text-[24px] leading-6 font-medium italic">机械设计论坛</span>
      </div>
      <div className="font-['Liberation_Serif',serif] text-[25px] leading-6">www.zgjxcad.com</div>
    </div>
  )
}

export default function App() {
  return (
    <div className="relative min-h-screen bg-white pr-[3px] font-['Noto_Sans','Noto_Sans_CJK_SC',sans-serif] text-[12px] leading-4 text-black">
      <div className="relative flex min-h-screen flex-col border-r-4 border-b-[3px] border-l-2 border-[#35446f] bg-[#f0f0fe]">
        <TitleBar />
        <MenuBar />
        <Toolbars />
        <main className="flex flex-1">
          <div className="flex w-[26px] shrink-0 flex-col items-center bg-linear-to-r from-[#fafaff] to-[#ececfc] pt-1.5">
            <GripH />
            <span className="h-[3px] shrink-0" />
            {drawTools.map(n => <ToolButton key={n} name={n} />)}
          </div>
          <div className="flex min-w-0 flex-1 flex-col">
            <DocTabs />
            <div className="mb-0.5 flex flex-1 flex-col border-r border-b-2 border-l-2 border-[#c6d0d4]">
              <div className="relative flex-1 overflow-hidden bg-black">
                <Drawing />
              </div>
              <SheetTabs />
            </div>
          </div>
          <PropertiesPanel />
          <div className="flex w-[26px] shrink-0 flex-col items-center bg-linear-to-r from-[#fafaff] to-[#f0f0fe] pt-1.5">
            <GripH />
            <span className="h-[3px] shrink-0" />
            {editTools.map(n => <ToolButton key={n} name={n} />)}
            <span className="my-0.5 h-px w-3.5 bg-[#c2cccc]" />
            <ToolButton name="match" />
          </div>
        </main>
        <CommandPanel />
        <StatusBar />
        <Watermark />
        <svg width="56" height="42" viewBox="0 0 56 42" className="pointer-events-none absolute top-[160px] left-[401px] z-30" aria-hidden="true">
          <path d="M0 21L20 0h17L23 15h33v12H23l14 15H20z" fill="#d96544" />
        </svg>
      </div>
      <svg width="3" height="110" viewBox="0 0 3 110" className="absolute top-[315px] right-0" aria-hidden="true">
        <path d="M0 2l3 3v5l-3-4zM0 103l3-4v6l-3 3z" fill="#0e6a9c" />
      </svg>
    </div>
  )
}
